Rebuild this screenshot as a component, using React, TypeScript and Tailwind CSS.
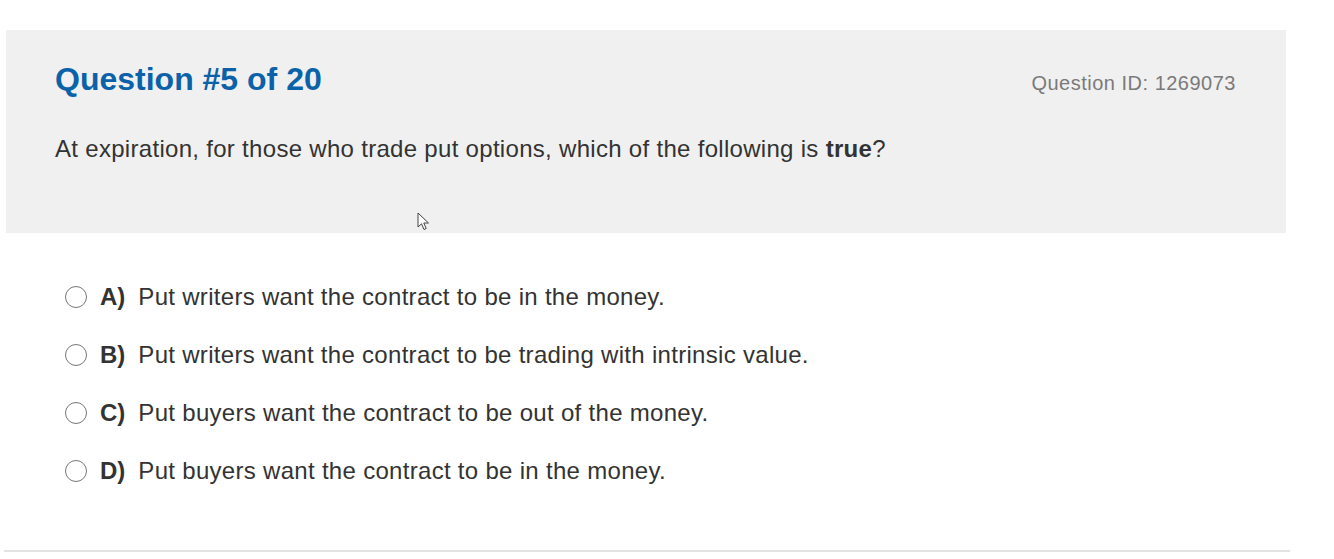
import React from 'react';

const options = [
  { key: 'A', text: 'Put writers want the contract to be in the money.' },
  { key: 'B', text: 'Put writers want the contract to be trading with intrinsic value.' },
  { key: 'C', text: 'Put buyers want the contract to be out of the money.' },
  { key: 'D', text: 'Put buyers want the contract to be in the money.' },
];

const Cursor: React.FC<{ className?: string }> = ({ className }) => (
  <svg className={className} width="14" height="20" viewBox="0 0 14 20" fill="none">
    <path d="M1 1 L1 15 L4.5 11.8 L7 17.5 L9.2 16.5 L6.8 11 L11.5 11 Z" fill="#fff" stroke="#444" strokeWidth="1" strokeLinejoin="round" />
  </svg>
);

export default function App() {
  return (
    <div className="relative w-full h-[559px] bg-white overflow-hidden" style={{ fontFamily: '"Liberation Sans", Arial, sans-serif' }}>
      {/* Question header panel */}
      <div className="ml-[6px] mt-[30px] w-[1280px] h-[203px] bg-[#f0f0f0] pl-[49px] pr-[50px] pt-[31px]">
        <div className="flex justify-between items-start">
          <h1 className="text-[32px] leading-[37px] font-bold text-[#0b62a9]">Question #5 of 20</h1>
          <span className="mt-[11px] text-[20px] leading-[23px] tracking-[0.5px] text-[#7a7a7a]">Question ID: 1269073</span>
        </div>
        <p className="mt-[37px] text-[24px] leading-[28px] tracking-[0.3px] text-[#333]">
          At expiration, for those who trade put options, which of the following is <strong className="font-bold">true</strong>?
        </p>
      </div>

      {/* Answer options */}
      <div className="mt-[35px] pl-[65px]">
        {options.map((o) => (
          <div key={o.key} className="flex items-center h-[58px]">
            <span className="w-[22px] h-[22px] rounded-full border-[1.5px] border-[#777] bg-white shrink-0" />
            <span className="ml-[13px] mr-[13px] text-[24px] leading-[28px] font-bold text-[#333]">{o.key})</span>
            <span className="text-[24px] leading-[28px] tracking-[0.3px] text-[#333]">{o.text}</span>
          </div>
        ))}
      </div>

      {/* bottom divider */}
      <div className="absolute left-[4px] top-[550px] w-[1286px] h-[2px] bg-[#e2e2e2]" />

      <Cursor className="absolute left-[417px] top-[212px]" />
    </div>
  );
}
